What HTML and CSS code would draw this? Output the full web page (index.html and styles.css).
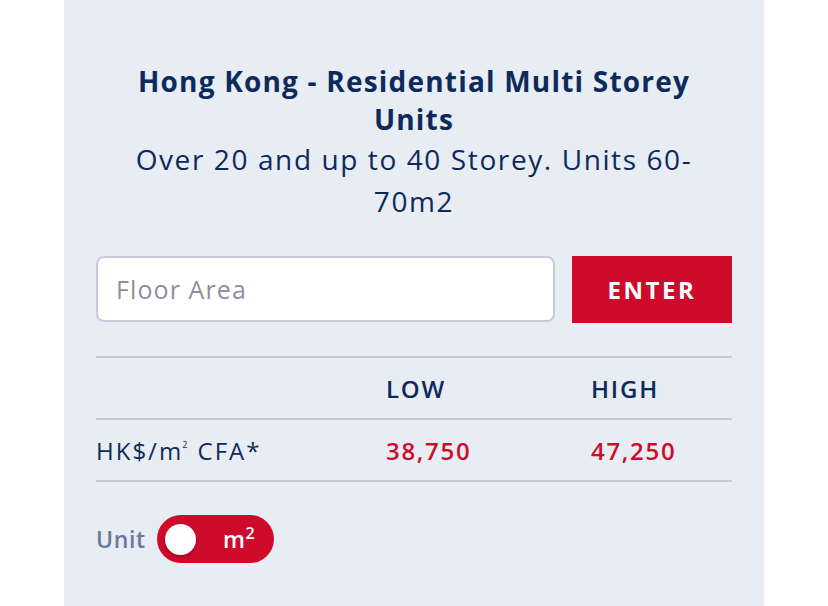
FILE: index.html
```html
<!DOCTYPE html>
<html>
<head>
  <meta charset="UTF-8" />
  <link rel="stylesheet" href="styles.css">
</head>
<body>
  <div class="panel">
    <div class="heading">
      <h3>Hong Kong - Residential Multi Storey Units</h3>
      <p>Over 20 and up to 40 Storey. Units 60-70m2</p>
    </div>

    <div class="entry">
      <input type="text" class="area-input" placeholder="Floor Area" />
      <button class="btn-enter">ENTER</button>
    </div>

    <table class="rates">
      <tr>
        <th class="col-label"></th>
        <th class="col-low">LOW</th>
        <th class="col-high">HIGH</th>
      </tr>
      <tr>
        <td class="col-label">HK$/m<sup class="sq">2</sup> CFA*</td>
        <td class="price">38,750</td>
        <td class="price">47,250</td>
      </tr>
    </table>

    <div class="unit-row">
      <span class="unit-label">Unit</span>
      <div class="toggle">
        <span class="knob"></span>
        <span class="toggle-text">m<sup>2</sup></span>
      </div>
    </div>
  </div>
</body>
</html>
```

FILE: styles.css
```css
body {
  margin: 0;
  background: #FFFFFF;
  font-family: 'Open Sans', 'DejaVu Sans', sans-serif;
  color: #0D2A5C;
}

.panel {
  width: 636px;
  height: 544px;
  margin-left: 64px;
  padding: 62px 32px 0;
  background: #E8ECF3;
}

.heading {
  padding: 0 8px;
  text-align: center;
}

.heading h3 {
  margin: 0;
  font-size: 28px;
  line-height: 38px;
  font-weight: 700;
  letter-spacing: 1.2px;
}

.heading p {
  margin: 0;
  font-size: 28px;
  line-height: 42px;
  font-weight: 400;
  letter-spacing: 1.6px;
}

.entry {
  display: flex;
  gap: 17px;
  margin-top: 34px;
}

.area-input {
  flex: 1;
  height: 66px;
  box-sizing: border-box;
  padding: 0 18px;
  border: 2px solid #C8CBDD;
  border-radius: 8px;
  background: #FFFFFF;
  font-family: inherit;
  font-size: 25px;
  letter-spacing: 1.1px;
  color: #0D2A5C;
}

.area-input::placeholder {
  color: #8B90A0;
}

.btn-enter {
  width: 160px;
  height: 67px;
  border: none;
  background: #CF0B2C;
  color: #FFFFFF;
  font-family: inherit;
  font-size: 24px;
  font-weight: 700;
  letter-spacing: 2.6px;
}

.rates {
  width: 100%;
  margin-top: 33px;
  border-collapse: collapse;
  border-top: 2px solid #C6CAD4;
}

.rates th,
.rates td {
  height: 60px;
  padding: 0;
  text-align: left;
  border-bottom: 2px solid #C6CAD4;
  font-size: 24px;
}

.rates th {
  font-weight: 600;
  letter-spacing: 1.8px;
}

.col-label {
  width: 290px;
}

.col-low {
  width: 205px;
}

.rates td.col-label {
  font-weight: 400;
  letter-spacing: 2px;
}

.sq {
  font-size: 9px;
  line-height: 0;
  margin-left: -1px;
  vertical-align: 12px;
}

.price {
  color: #CF0B2C;
  font-weight: 600;
  letter-spacing: 1.7px;
}

.unit-row {
  display: flex;
  align-items: center;
  margin-top: 33px;
}

.unit-label {
  width: 61px;
  font-size: 23px;
  font-weight: 600;
  letter-spacing: 0.6px;
  color: #6B7A99;
}

.toggle {
  display: flex;
  align-items: center;
  width: 117px;
  height: 48px;
  box-sizing: border-box;
  padding: 0 8px;
  border-radius: 24px;
  background: #CF0B2C;
}

.knob {
  width: 31px;
  height: 31px;
  border-radius: 50%;
  background: #FFFFFF;
  box-shadow: 0 2px 3px rgba(0, 0, 0, 0.25);
}

.toggle-text {
  margin-left: 27px;
  color: #FFFFFF;
  font-size: 23px;
  font-weight: 600;
  letter-spacing: 0.5px;
}

.toggle-text sup {
  font-size: 16px;
  line-height: 0;
}
```
